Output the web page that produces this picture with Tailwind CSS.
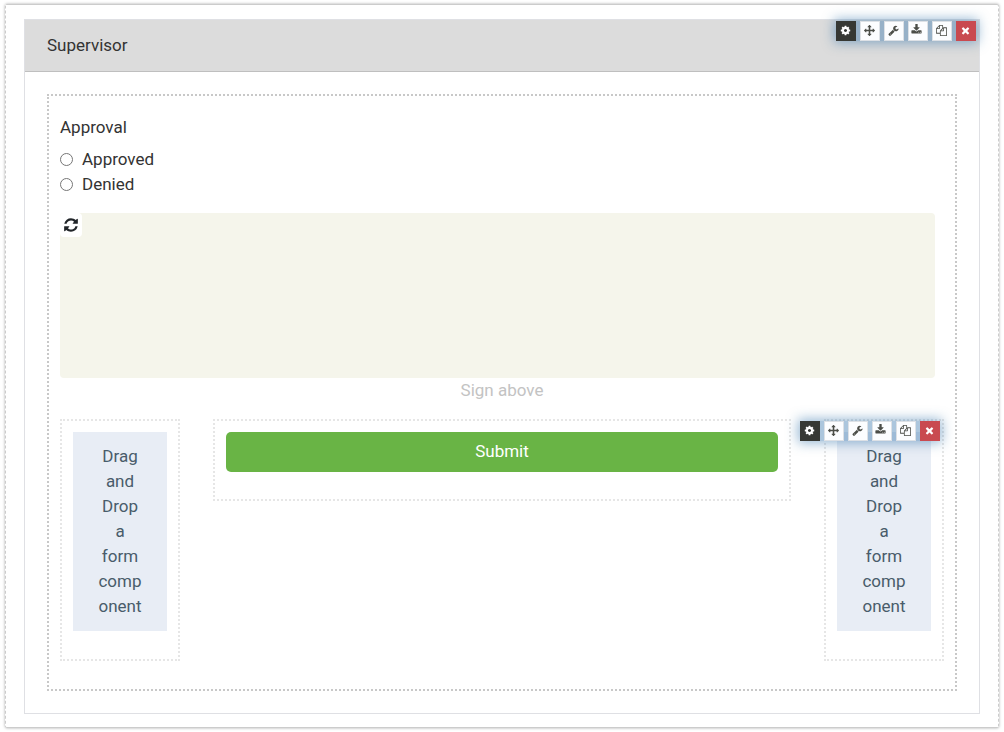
<!DOCTYPE html>
<html lang="en">
<head>
  <meta charset="UTF-8" />
  <meta name="viewport" content="width=device-width, initial-scale=1.0" />
  <title>Form Builder</title>
  <script src="https://cdn.jsdelivr.net/npm/@tailwindcss/browser@4"></script>
</head>
<body class="bg-white font-['Roboto',sans-serif] text-[17px] leading-[25px] text-[#333]">

  <!-- icon set -->
  <svg class="hidden" aria-hidden="true">
    <symbol id="cog" viewBox="0 0 1792 1792"><path d="M1152 896q0-106-75-181t-181-75-181 75-75 181 75 181 181 75 181-75 75-181zm512-109v222q0 12-8 23t-20 13l-185 28q-19 54-39 91 35 50 107 138 10 12 10 25t-9 23q-27 37-99 108t-94 71q-12 0-26-9l-138-108q-44 23-91 38-16 136-29 186-7 28-36 28h-222q-14 0-24.500-8.500t-11.500-21.500l-28-184q-49-16-90-37l-141 107q-10 9-25 9-14 0-25-11-126-114-165-168-7-10-7-23 0-12 8-23 15-21 51-66.500t54-70.500q-27-50-41-99l-183-27q-13-2-21-12.500t-8-23.500v-222q0-12 8-23t19-13l186-28q14-46 39-92-40-57-107-138-10-12-10-24 0-10 9-23 26-36 98.500-107.500t94.500-71.500q13 0 26 10l138 107q44-23 91-38 16-136 29-186 7-28 36-28h222q14 0 24.500 8.500t11.500 21.500l28 184q49 16 90 37l142-107q9-9 24-9 13 0 25 10 129 119 165 170 7 8 7 22 0 12-8 23-15 21-51 66.500t-54 70.500q26 50 41 98l183 28q13 2 21 12.500t8 23.500z"/></symbol>
    <symbol id="arrows" viewBox="0 0 1792 1792"><path d="M1792 896q0 26-19 45l-256 256q-19 19-45 19t-45-19-19-45v-128h-384v384h128q26 0 45 19t19 45-19 45l-256 256q-19 19-45 19t-45-19l-256-256q-19-19-19-45t19-45 45-19h128v-384h-384v128q0 26-19 45t-45 19-45-19l-256-256q-19-19-19-45t19-45l256-256q19-19 45-19t45 19 19 45v128h384v-384h-128q-26 0-45-19t-19-45 19-45l256-256q19-19 45-19t45 19l256 256q19 19 19 45t-19 45-45 19h-128v384h384v-128q0-26 19-45t45-19 45 19l256 256q19 19 19 45z"/></symbol>
    <symbol id="wrench" viewBox="0 0 1792 1792"><path d="M448 1472q0-26-19-45t-45-19-45 19-19 45 19 45 45 19 45-19 19-45zm644-420l-682 682q-37 37-90 37-52 0-91-37l-106-108q-38-36-38-90 0-53 38-91l681-681q39 98 114.500 173.500t173.500 114.500zm634-435q0 39-23 106-47 134-164.500 217.500t-258.500 83.500q-185 0-316.500-131.500t-131.500-316.500 131.500-316.500 316.500-131.500q58 0 121.500 16.500t107.500 46.500q16 11 16 28t-16 28l-293 169v224l193 107q5-3 79-48.500t135.500-81 70.500-35.500q15 0 23.500 10t8.500 25z"/></symbol>
    <symbol id="download" viewBox="0 0 1792 1792"><path d="M1344 1344q0-26-19-45t-45-19-45 19-19 45 19 45 45 19 45-19 19-45zm256 0q0-26-19-45t-45-19-45 19-19 45 19 45 45 19 45-19 19-45zm128-224v320q0 40-28 68t-68 28h-1472q-40 0-68-28t-28-68v-320q0-40 28-68t68-28h465l135 136q58 56 136 56t136-56l136-136h464q40 0 68 28t28 68zm-325-569q17 41-14 70l-448 448q-18 19-45 19t-45-19l-448-448q-31-29-14-70 17-39 59-39h256v-448q0-26 19-45t45-19h256q26 0 45 19t19 45v448h256q42 0 59 39z"/></symbol>
    <symbol id="copy" viewBox="0 0 1792 1792"><path d="M1696 384q40 0 68 28t28 68v1216q0 40-28 68t-68 28h-960q-40 0-68-28t-28-68v-288h-544q-40 0-68-28t-28-68v-672q0-40 20-88t48-76l408-408q28-28 76-48t88-20h416q40 0 68 28t28 68v328q68-40 128-40h416zm-544 213l-299 299h299v-299zm-640-384l-299 299h299v-299zm196 647l316-316v-416h-384v416q0 40-28 68t-68 28h-416v640h512v-256q0-40 20-88t48-76zm956 804v-1152h-384v416q0 40-28 68t-68 28h-416v640h896z"/></symbol>
    <symbol id="times" viewBox="0 0 1792 1792"><path d="M1490 1322q0 40-28 68l-136 136q-28 28-68 28t-68-28l-294-294-294 294q-28 28-68 28t-68-28l-136-136q-28-28-28-68t28-68l294-294-294-294q-28-28-28-68t28-68l136-136q28-28 68-28t68 28l294 294 294-294q28-28 68-28t68 28l136 136q28 28 28 68t-28 68l-294 294 294 294q28 28 28 68z"/></symbol>
    <symbol id="refresh" viewBox="0 0 1792 1792"><path d="M1639 1056q0 5-1 7-64 268-268 434.500t-478 166.500q-146 0-282.500-55t-243.500-157l-129 129q-19 19-45 19t-45-19-19-45v-448q0-26 19-45t45-19h448q26 0 45 19t19 45-19 45l-137 137q71 66 161 102t187 36q134 0 250-65t186-179q11-17 53-117 8-23 30-23h192q13 0 22.500 9.500t9.500 22.500zm25-800v448q0 26-19 45t-45 19h-448q-26 0-45-19t-19-45 19-45l138-138q-148-137-349-137-134 0-250 65t-186 179q-11 17-53 117-8 23-30 23h-199q-13 0-22.500-9.500t-9.500-22.500v-7q65-268 270-434.500t480-166.500q146 0 284 55.500t245 156.500l130-129q19-19 45-19t45 19 19 45z"/></symbol>
  </svg>

  <main class="px-[5px] py-1">
    <div class="rounded-xs border border-[#ccc] [border-inline-style:dashed] px-[18px] pt-[14px] pb-[13px] shadow-[0_0_3px_rgba(0,0,0,0.35)]">

      <section class="relative border border-[#dfe0e4]">
        <header class="border-b border-[#bfbfbf] bg-[#dcdcdc] px-[22px] py-[13px]">
          <h1>Supervisor</h1>
        </header>

        <div class="absolute top-px right-[3px] flex gap-1 bg-[#3071a9]/40 text-[#4b4d48] shadow-[0_0_12px_2px_rgba(48,113,169,0.5)]">
          <button type="button" aria-label="Settings" class="grid size-5 place-items-center bg-[#363834] pr-px pb-px text-white"><svg class="size-[11px] fill-current"><use href="#cog"/></svg></button>
          <button type="button" aria-label="Move" class="grid size-5 place-items-center border border-[#dde1e6] bg-[#fcfdff] pr-px pb-px"><svg class="size-[11px] fill-current"><use href="#arrows"/></svg></button>
          <button type="button" aria-label="Edit" class="grid size-5 place-items-center border border-[#dde1e6] bg-[#fcfdff] pr-px pb-px"><svg class="size-[11px] fill-current"><use href="#wrench"/></svg></button>
          <button type="button" aria-label="Paste below" class="grid size-5 place-items-center border border-[#dde1e6] bg-[#fcfdff] pr-[3px] pb-[3px]"><svg class="size-[11px] fill-current"><use href="#download"/></svg></button>
          <button type="button" aria-label="Copy" class="grid size-5 place-items-center border border-[#dde1e6] bg-[#fcfdff] pr-px pb-px"><svg class="size-[11px] fill-current"><use href="#copy"/></svg></button>
          <button type="button" aria-label="Remove" class="grid size-5 place-items-center bg-[#c94a50] pr-px pb-px text-white"><svg class="size-[11px] fill-current"><use href="#times"/></svg></button>
        </div>

        <div class="p-[22px]">
          <form class="border-2 border-dotted border-[#c8c8c8] px-[11px] pt-[19px] pb-7">

            <fieldset>
              <legend>Approval</legend>
              <div class="mt-[7px]">
                <label class="flex items-center gap-[9px]"><input type="radio" name="approval" value="approved" class="size-[13px] appearance-none rounded-full border border-[#767676] bg-white checked:border-4">Approved</label>
                <label class="flex items-center gap-[9px]"><input type="radio" name="approval" value="denied" class="size-[13px] appearance-none rounded-full border border-[#767676] bg-white checked:border-4">Denied</label>
              </div>
            </fieldset>

            <div class="mt-4">
              <div class="mr-[9px] h-[165px] rounded bg-[#f5f5eb]">
                <button type="button" aria-label="Clear signature" class="grid h-6 w-[22px] place-items-center rounded bg-white text-[#212529]"><svg class="size-4 fill-current"><use href="#refresh"/></svg></button>
              </div>
              <p class="text-center text-[#c3c3c3]">Sign above</p>
            </div>

            <div class="mt-4 grid grid-cols-[120px_1fr_120px] items-start gap-[33px]">
              <div class="border-2 border-dotted border-[#e6e6e6] px-[11px] pt-[11px] pb-7">
                <div class="bg-[#e8edf5] px-6 py-3 text-center break-words text-[#495c6a]">Drag and Drop a form component</div>
              </div>

              <div class="border-2 border-dotted border-[#e6e6e6] px-[11px] pt-[11px] pb-[27px]">
                <button type="submit" class="block h-10 w-full rounded-[5px] bg-[#69b445] pb-0.5 text-white">Submit</button>
              </div>

              <div class="relative border-2 border-dotted border-[#e6e6e6] px-[11px] pt-[11px] pb-7">
                <div class="bg-[#e8edf5] px-6 py-3 text-center break-words text-[#495c6a]">Drag and Drop a form component</div>
                <div class="absolute top-0 right-[2px] flex gap-1 bg-[#3071a9]/40 text-[#4b4d48] shadow-[0_0_12px_2px_rgba(48,113,169,0.5)]">
                  <button type="button" aria-label="Settings" class="grid size-5 place-items-center bg-[#363834] pr-px pb-px text-white"><svg class="size-[11px] fill-current"><use href="#cog"/></svg></button>
                  <button type="button" aria-label="Move" class="grid size-5 place-items-center border border-[#dde1e6] bg-[#fcfdff] pr-px pb-px"><svg class="size-[11px] fill-current"><use href="#arrows"/></svg></button>
                  <button type="button" aria-label="Edit" class="grid size-5 place-items-center border border-[#dde1e6] bg-[#fcfdff] pr-px pb-px"><svg class="size-[11px] fill-current"><use href="#wrench"/></svg></button>
                  <button type="button" aria-label="Paste below" class="grid size-5 place-items-center border border-[#dde1e6] bg-[#fcfdff] pr-[3px] pb-[3px]"><svg class="size-[11px] fill-current"><use href="#download"/></svg></button>
                  <button type="button" aria-label="Copy" class="grid size-5 place-items-center border border-[#dde1e6] bg-[#fcfdff] pr-px pb-px"><svg class="size-[11px] fill-current"><use href="#copy"/></svg></button>
                  <button type="button" aria-label="Remove" class="grid size-5 place-items-center bg-[#c94a50] pr-px pb-px text-white"><svg class="size-[11px] fill-current"><use href="#times"/></svg></button>
                </div>
              </div>
            </div>

          </form>
        </div>
      </section>

    </div>
  </main>

</body>
</html>
